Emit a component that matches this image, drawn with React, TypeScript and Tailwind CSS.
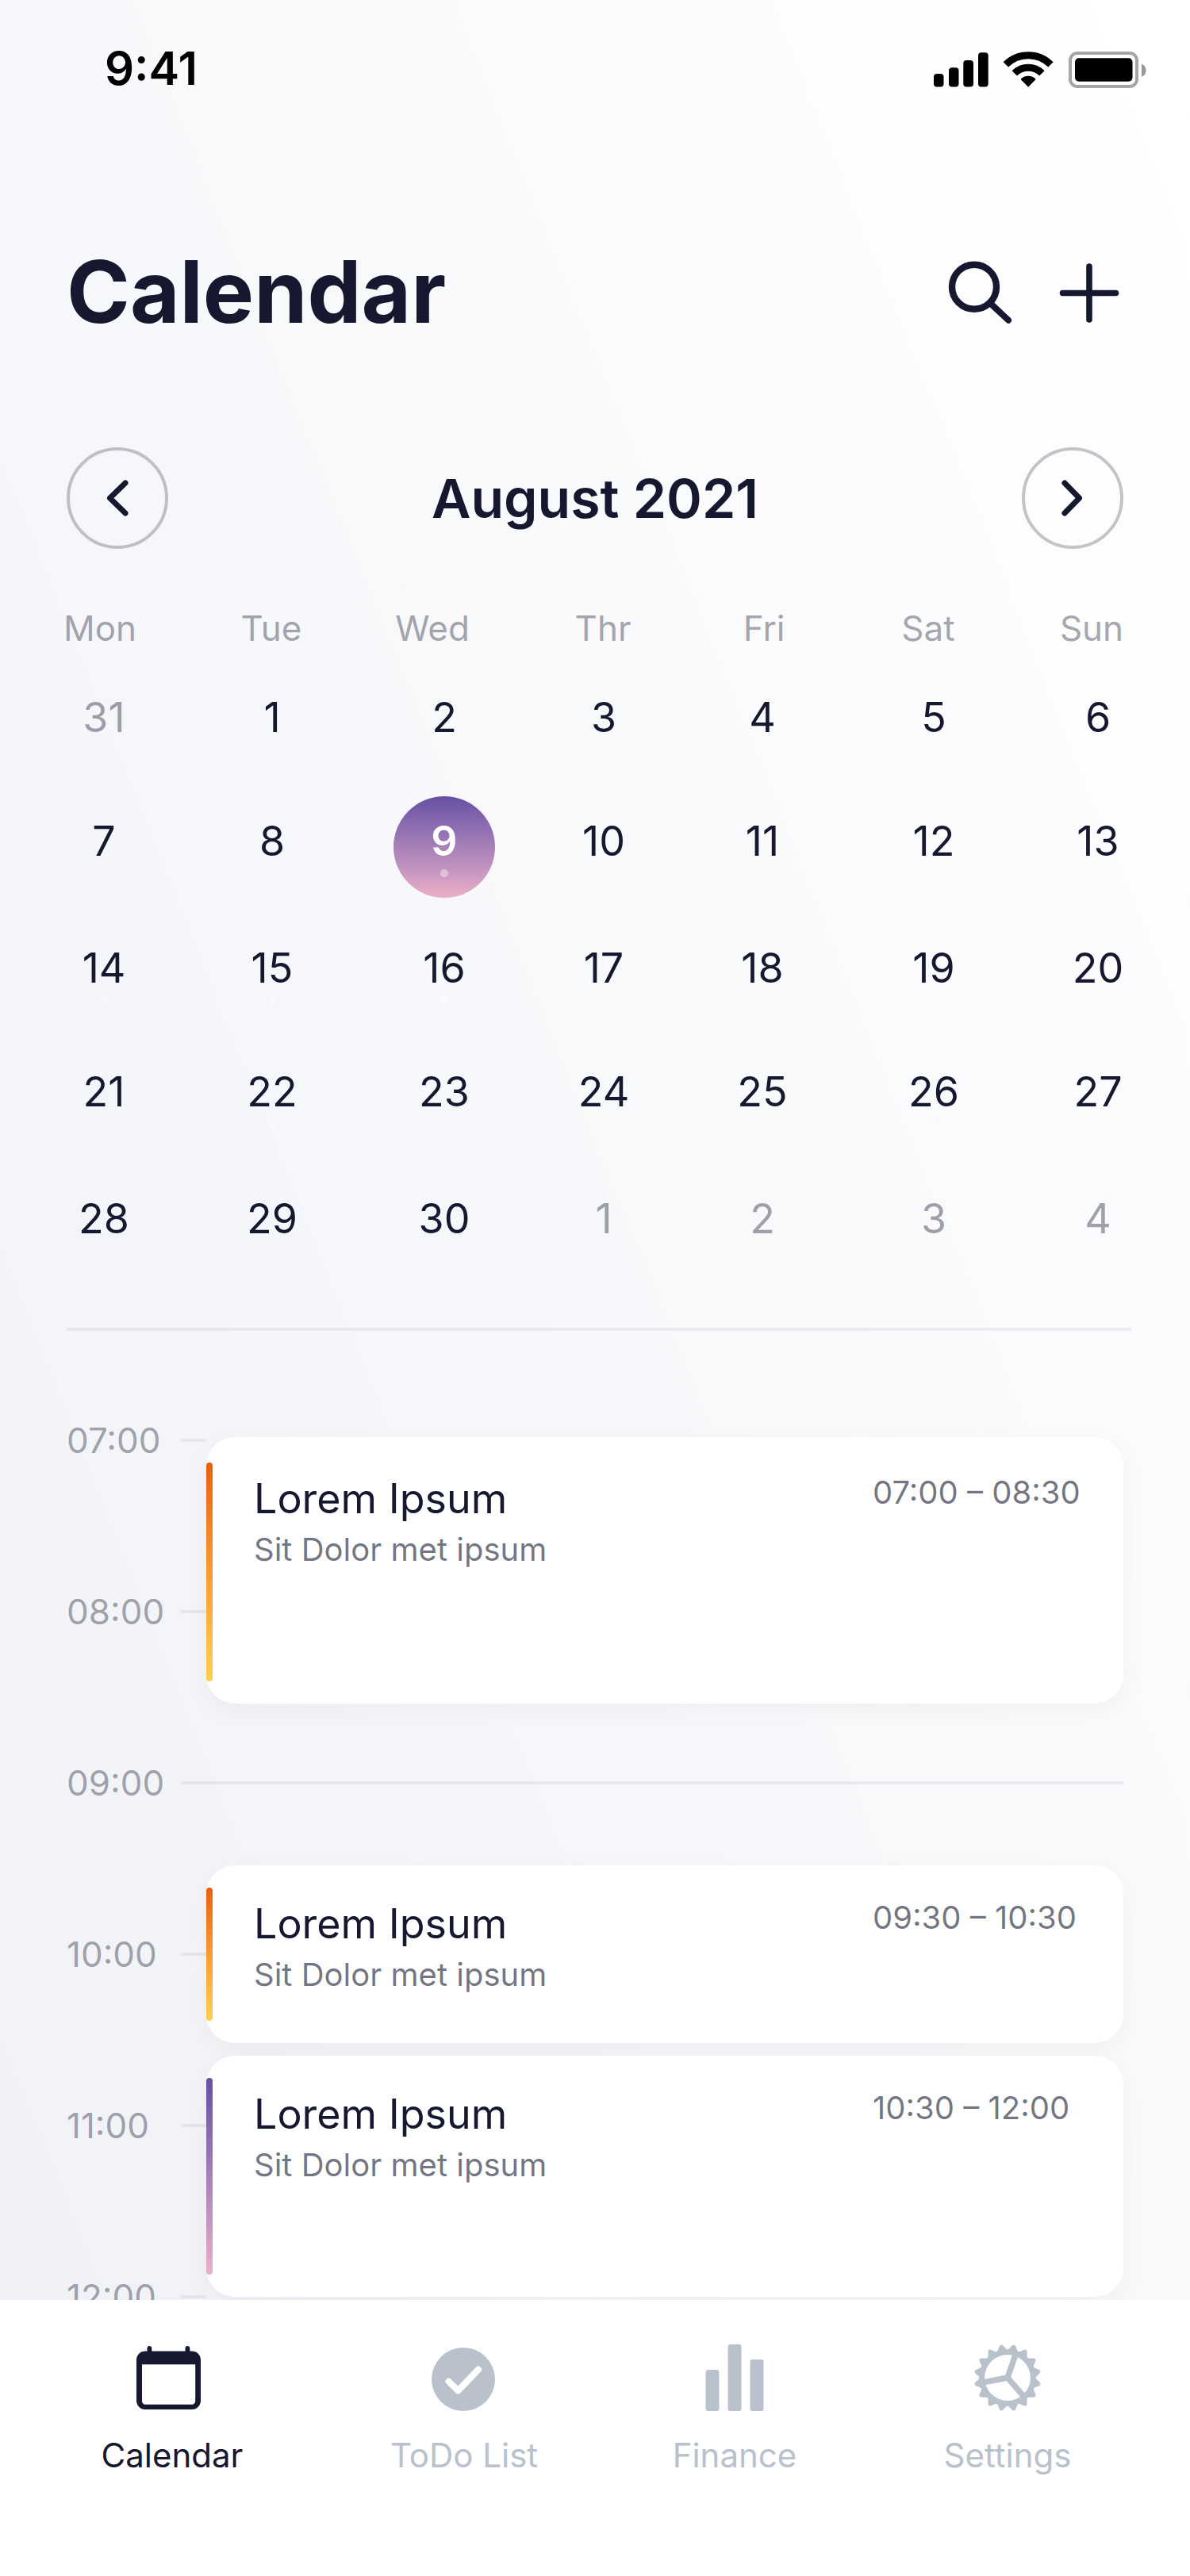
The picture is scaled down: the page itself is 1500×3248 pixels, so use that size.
import { useState } from "react";

type Tab = "Calendar" | "ToDo List" | "Finance" | "Settings";

const weekdays = ["Mon", "Tue", "Wed", "Thr", "Fri", "Sat", "Sun"];

const weeks: number[][] = [
  [31, 1, 2, 3, 4, 5, 6],
  [7, 8, 9, 10, 11, 12, 13],
  [14, 15, 16, 17, 18, 19, 20],
  [21, 22, 23, 24, 25, 26, 27],
  [28, 29, 30, 1, 2, 3, 4],
];

const markedDays = [9, 12, 14, 15, 16, 22, 26, 27];

const hours = ["07:00", "08:00", "09:00", "10:00", "11:00", "12:00"];

const events = [
  {
    time: "07:00 – 08:30",
    card: "h-[336px] pt-1",
    bar: "from-[#e9600c] to-[#ffd050]",
  },
  {
    time: "09:30 – 10:30",
    card: "mt-[204px] h-56",
    bar: "from-[#e9600c] to-[#ffd050]",
  },
  {
    time: "10:30 – 12:00",
    card: "mt-4 h-[304px]",
    bar: "from-[#6750a4] to-[#ecafc8]",
  },
];

function StatusIcons() {
  return (
    <svg width="268" height="50" viewBox="0 0 268 50" aria-hidden="true">
      <rect x="0" y="32" width="12.5" height="16.5" rx="4" />
      <rect x="19" y="24.3" width="12.5" height="24.2" rx="4" />
      <rect x="37.3" y="15" width="12.7" height="33.5" rx="4" />
      <rect x="56" y="5.3" width="12.7" height="43.2" rx="4" />
      <g fill="none" stroke="#000" strokeWidth="9">
        <path d="M90.8 20.4A40 40 0 0 1 147.4 20.4" />
        <path d="M101.8 31.4A24.5 24.5 0 0 1 136.4 31.4" />
      </g>
      <path d="M119.1 48.7L110 39.6Q109.6 38.6 110.4 38A13.5 13.5 0 0 1 127.8 38Q128.6 38.6 128.2 39.6Z" />
      <rect x="172" y="6" width="84" height="42" rx="9" fill="none" stroke="#000" strokeOpacity="0.35" strokeWidth="4" />
      <path d="M262 19.5V36Q267.6 33.2 267.6 27.7Q267.6 22.2 262 19.5Z" fillOpacity="0.4" />
      <rect x="178" y="12.2" width="72.5" height="29.6" rx="5" />
    </svg>
  );
}

function SearchIcon() {
  return (
    <svg width="88" height="88" viewBox="0 0 88 88" fill="none" stroke="currentColor" strokeWidth="8.4" strokeLinecap="round" aria-hidden="true">
      <circle cx="36" cy="37.7" r="28" />
      <path d="M57 59L79 79.7" strokeWidth="8" />
    </svg>
  );
}

function PlusIcon() {
  return (
    <svg width="88" height="88" viewBox="0 0 88 88" fill="none" stroke="currentColor" strokeWidth="7.6" strokeLinecap="round" aria-hidden="true">
      <path d="M45 12V79M11.5 45.5H78.5" />
    </svg>
  );
}

function Chevron({ next }: { next?: boolean }) {
  return (
    <svg width="48" height="56" viewBox="0 0 48 56" fill="none" stroke="currentColor" strokeWidth="7" strokeLinecap="round" strokeLinejoin="round" aria-hidden="true">
      {next ? <path d="M14 9L32.5 28L14 47" /> : <path d="M34 9L14.5 28L34 47" />}
    </svg>
  );
}

function CalendarIcon() {
  return (
    <svg width="90" height="84" viewBox="0 0 90 84" fill="currentColor" aria-hidden="true">
      <path
        fillRule="evenodd"
        d="M11 8.5H13.5V5a2.9 2.9 0 0 1 5.8 0V8.5H61.5V5a2.9 2.9 0 0 1 5.8 0V8.5H70A11 11 0 0 1 81 19.5V71A11 11 0 0 1 70 82H11A11 11 0 0 1 0 71V19.5A11 11 0 0 1 11 8.5ZM7 25.2V71.5A4.2 4.2 0 0 0 11.2 75.7H70A4.2 4.2 0 0 0 74.2 71.5V25.2Z"
      />
    </svg>
  );
}

function TodoIcon() {
  return (
    <svg width="84" height="84" viewBox="0 0 84 84" fill="none" aria-hidden="true">
      <circle cx="41" cy="44" r="40" fill="currentColor" />
      <path d="M22.6 46.7L34.4 58.4L60 31.7" stroke="#fff" strokeWidth="8.2" strokeLinecap="round" strokeLinejoin="round" />
    </svg>
  );
}

function FinanceIcon() {
  return (
    <svg width="84" height="84" viewBox="0 0 84 84" fill="currentColor" aria-hidden="true">
      <rect x="5.5" y="32" width="17" height="52" rx="3.5" />
      <rect x="33.5" y="0" width="17" height="84" rx="3" />
      <rect x="61.5" y="19" width="17" height="65" rx="3" />
    </svg>
  );
}

const TEETH = 16;

function polar(radius: number, degrees: number) {
  const a = (degrees * Math.PI) / 180;
  return `${(42 + radius * Math.sin(a)).toFixed(2)} ${(42 - radius * Math.cos(a)).toFixed(2)}`;
}

function gearOutline() {
  const step = 360 / TEETH;
  let d = `M${polar(36.2, -2)}`;
  for (let i = 0; i < TEETH; i++) {
    const valley = i * step;
    const tip = valley + step / 2;
    d += `Q${polar(35, valley)} ${polar(36.2, valley + 2)}`;
    d += `Q${polar(37.4, tip - 6.4)} ${polar(40.3, tip - 4)}`;
    d += `Q${polar(44.4, tip)} ${polar(40.3, tip + 4)}`;
    d += `Q${polar(37.4, tip + 6.4)} ${polar(36.2, valley + step - 2)}`;
  }
  return d + "Z";
}

function SettingsIcon() {
  return (
    <svg width="84" height="84" viewBox="0 0 84 84" fill="currentColor" aria-hidden="true">
      <path fillRule="evenodd" d={`${gearOutline()}M42 13A29 29 0 1 0 42 71A29 29 0 1 0 42 13Z`} />
      <path d={`M42 42L${polar(31, 19)}M42 42L${polar(31, 139)}M42 42L${polar(31, 259)}`} stroke="currentColor" strokeWidth="7.4" />
    </svg>
  );
}

const tabs: { name: Tab; Icon: () => React.JSX.Element }[] = [
  { name: "Calendar", Icon: CalendarIcon },
  { name: "ToDo List", Icon: TodoIcon },
  { name: "Finance", Icon: FinanceIcon },
  { name: "Settings", Icon: SettingsIcon },
];

function MonthTable() {
  const [selected, setSelected] = useState("1-9");
  return (
    <table className="mt-18 block w-full" aria-label="August 2021">
      <thead className="block">
        <tr className="mb-7 grid grid-cols-[230fr_202fr_204fr_226fr_180fr_234fr_178fr] pr-[35px] pl-[11px]">
          {weekdays.map((day) => (
            <th key={day} scope="col" className="text-center text-[44px] leading-14 font-normal text-[#16182f]/40">
              {day}
            </th>
          ))}
        </tr>
      </thead>
      <tbody className="block">
        {weeks.map((week, row) => (
          <tr
            key={row}
            className="grid grid-cols-[212fr_212fr_222fr_180fr_220fr_212fr_202fr] pr-[15px] pl-[25px] odd:h-39 even:h-40"
          >
            {week.map((day, column) => {
              const id = `${row}-${day}`;
              const outside = (row === 0 && column === 0) || (row === 4 && column > 2);
              const isSelected = selected === id;
              const color = isSelected
                ? "bg-linear-to-b from-[#6750a4] to-[#ecafc8] font-semibold text-white"
                : outside
                  ? "text-[#16182f]/40"
                  : "";
              return (
                <td key={column} className="flex justify-center p-0">
                  <button
                    type="button"
                    aria-pressed={isSelected}
                    onClick={() => setSelected(id)}
                    className={`flex size-32 flex-col items-center gap-[3px] rounded-full pt-[25px] text-[52px] leading-16 ${color}`}
                  >
                    {day}
                    {markedDays.includes(day) && <span className="size-2.5 rounded-full bg-white/40" />}
                  </button>
                </td>
              );
            })}
          </tr>
        ))}
      </tbody>
    </table>
  );
}

function Timeline() {
  return (
    <section className="mx-21 mt-[110px] grid" aria-label="Events">
      <ol className="col-start-1 row-start-1">
        {hours.map((hour) => (
          <li key={hour} className="mb-40 flex h-14 items-center">
            <time className="w-36 shrink-0 text-[44px] leading-14 text-[#16182f]/40">{hour}</time>
            <span className={`h-1 bg-[#16182f]/6 ${hour === "09:00" ? "flex-1" : "w-8"}`} />
          </li>
        ))}
      </ol>
      <div className="col-start-1 row-start-1 pt-6 pl-44">
        {events.map((event) => (
          <article
            key={event.time}
            className={`flex rounded-[36px] bg-white shadow-[0_8px_32px_rgba(0,0,0,0.04)] ${event.card}`}
          >
            <span className={`my-7 w-2 shrink-0 rounded-full bg-linear-to-b ${event.bar}`} />
            <div className="min-w-0 flex-1 pt-[42px] pl-13">
              <h3 className="text-[52px] leading-16">Lorem Ipsum</h3>
              <p className="mt-2 text-[40px] leading-12 text-[#16182f]/60">Sit Dolor met ipsum</p>
            </div>
            <time className="w-[316px] shrink-0 pt-[42px] text-[40px] leading-12 text-[#16182f]/60">{event.time}</time>
          </article>
        ))}
      </div>
    </section>
  );
}

export default function App() {
  const [tab, setTab] = useState<Tab>("Calendar");
  return (
    <div className="flex h-screen flex-col bg-linear-[248deg] from-white to-[#eff1f6] font-['Inter',sans-serif] text-[#16182f]">
      <main className="min-h-0 flex-1 overflow-y-auto [scrollbar-width:none]">
        <div className="flex h-44 items-center justify-between pr-[55px] pb-1 pl-33 text-black">
          <span className="text-[58px] leading-none font-semibold">9:41</span>
          <StatusIcons />
        </div>

        <header className="mx-21 mt-32 flex items-center justify-between">
          <h1 className="text-[108px] leading-32 font-bold">Calendar</h1>
          <div className="flex gap-12">
            <button type="button" aria-label="Search">
              <SearchIcon />
            </button>
            <button type="button" aria-label="Add event">
              <PlusIcon />
            </button>
          </div>
        </header>

        <div className="mx-21 mt-33 flex items-center justify-between">
          <button
            type="button"
            aria-label="Previous month"
            className="flex size-32 items-center justify-center rounded-full border-4 border-[#16182f]/25"
          >
            <Chevron />
          </button>
          <h2 className="text-[68px] leading-20 font-semibold">August 2021</h2>
          <button
            type="button"
            aria-label="Next month"
            className="flex size-32 items-center justify-center rounded-full border-4 border-[#16182f]/25"
          >
            <Chevron next />
          </button>
        </div>

        <MonthTable />
        <hr className="mt-[38px] mr-[74px] ml-21 h-1 border-0 bg-[#16182f]/6" />
        <Timeline />
      </main>

      <nav className="grid h-[348px] shrink-0 grid-cols-[374fr_362fr_320fr_368fr] items-start bg-white pt-14 pr-[46px] pl-[30px]">
        {tabs.map(({ name, Icon }) => (
          <button
            key={name}
            type="button"
            aria-current={tab === name ? "page" : undefined}
            onClick={() => setTab(name)}
            className={`flex flex-col items-center gap-7 text-[42px] leading-14 ${tab === name ? "" : "text-[#b9c1cc]"}`}
          >
            <Icon />
            {name}
          </button>
        ))}
      </nav>
    </div>
  );
}
